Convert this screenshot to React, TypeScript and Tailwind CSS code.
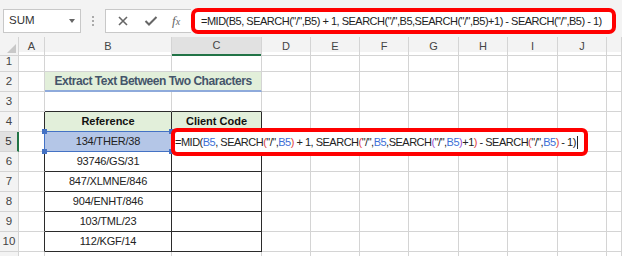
const GRID =
  "grid grid-cols-[19px_26px_127px_90px_49px_49px_49px_50px_49px_50px_49px_1fr]";
const COLS = ["A", "B", "C", "D", "E", "F", "G", "H", "I", "J", "K"];

const data: Record<number, string> = {
  5: "134/THER/38",
  6: "93746/GS/31",
  7: "847/XLMNE/846",
  8: "904/ENHT/846",
  9: "103/TML/23",
  10: "112/KGF/14",
};

const BLUE = "text-[#3d6fd6]";
const RED = "text-[#e23c3c]";
const PURPLE = "text-[#9c4fd4]";

// formula while editing the cell, with Excel's coloured refs and parens
const parts: [string, string][] = [
  ["=MID(", ""],
  ["B5", BLUE],
  [", SEARCH", ""],
  ["(", RED],
  ['"/",', ""],
  ["B5", BLUE],
  [")", RED],
  [" + 1, SEARCH", ""],
  ["(", RED],
  ['"/",', ""],
  ["B5", BLUE],
  [",SEARCH", ""],
  ["(", PURPLE],
  ['"/",', ""],
  ["B5", BLUE],
  [")", PURPLE],
  ["+1", ""],
  [")", RED],
  [" - SEARCH", ""],
  ["(", RED],
  ['"/",', ""],
  ["B5", BLUE],
  [")", RED],
  [" - 1)", ""],
];

const formula = parts.map((p) => p[0]).join("");

const Toolbar = () => (
  <div className="flex h-[37px] items-start bg-[#f3f3f3] pl-[3px] pt-[9px]">
    <div className="flex h-[24px] w-[78px] items-center justify-between border border-[#c8c8c8] bg-white pl-[5px] pr-[5px] text-[11.5px] text-[#333]">
      <span>SUM</span>
      <span className="h-0 w-0 border-x-[3px] border-t-[4px] border-x-transparent border-t-[#666]" />
    </div>
    <div className="flex h-[24px] w-[24px] flex-col items-center justify-center gap-[2px]">
      <span className="h-[2px] w-[2px] bg-[#aaa]" />
      <span className="h-[2px] w-[2px] bg-[#aaa]" />
      <span className="h-[2px] w-[2px] bg-[#aaa]" />
    </div>
    <div className="flex h-[24px] w-[86px] items-center border border-r-0 border-[#c8c8c8] bg-white pl-[10px]">
      <svg width="12" height="12" viewBox="0 0 12 12" className="ml-[1px]">
        <path d="M2 2 L10 10 M10 2 L2 10" stroke="#666" strokeWidth="1.6" fill="none" />
      </svg>
      <svg width="14" height="12" viewBox="0 0 14 12" className="ml-[15px]">
        <path d="M1.5 6 L5 9.5 L12.5 2" stroke="#666" strokeWidth="2" fill="none" />
      </svg>
      <span className="ml-[14px] font-['Liberation_Serif',serif] text-[13px] italic text-[#666]">
        f<span className="text-[10px]">x</span>
      </span>
    </div>
    <div className="-mt-[1px] mr-[6px] flex h-[26px] flex-1 items-center rounded-[7px] border-4 border-[#ff0000] bg-white pl-[6px] text-[11px] tracking-[-0.5px] whitespace-pre text-[#222]">
      {formula}
    </div>
  </div>
);

const HeaderRow = () => (
  <div className={`${GRID} h-[15px] bg-[#f3f3f3] text-[11px] text-[#444]`}>
    <div className="relative border-r border-b border-[#d4d4d4]">
      <span className="absolute right-[2px] bottom-[2px] h-0 w-0 border-b-[9px] border-l-[9px] border-b-[#c8c8c8] border-l-transparent" />
    </div>
    {COLS.map((c) => (
      <div
        key={c}
        className={
          c === "C"
            ? "flex items-center justify-center border-r border-b-2 border-r-[#d4d4d4] border-b-[#217346] bg-[#e1e1e1]"
            : "flex items-center justify-center border-r border-b border-[#d4d4d4]"
        }
      >
        {c === "K" ? "" : c}
      </div>
    ))}
  </div>
);

const Row = ({ r }: { r: number }) => {
  const inTable = r >= 4 && r <= 10;
  const tableCell = "border-r border-b border-[#2b2b2b]";
  const plain = "border-r border-b border-[#d4d4d4]";

  return (
    <div className={`${GRID} h-[20px] text-[11px]`}>
      <div
        className={
          r === 5
            ? "flex items-center justify-center border-r-2 border-b border-r-[#217346] border-b-[#d4d4d4] bg-[#e1e1e1] text-[11.5px] text-[#333]"
            : "flex items-center justify-center border-r border-b border-[#d4d4d4] bg-[#f3f3f3] text-[11.5px] text-[#444]"
        }
      >
        {r <= 10 ? r : ""}
      </div>
      <div className={inTable ? "border-r border-b border-r-[#2b2b2b] border-b-[#d4d4d4]" : plain} />

      {r === 2 ? (
        <div className="col-span-2 flex items-center justify-center border-r border-b-2 border-r-[#d4d4d4] border-b-[#8eaadb] bg-[#e2efda] text-[12px] font-bold tracking-[-0.45px] text-[#44546a]">
          Extract Text Between Two Characters
        </div>
      ) : r === 4 ? (
        <>
          <div className={`${tableCell} flex items-center justify-center bg-[#e2efda] font-bold text-[#111]`}>
            Reference
          </div>
          <div className={`${tableCell} flex items-center justify-center bg-[#e2efda] font-bold text-[#111]`}>
            Client Code
          </div>
        </>
      ) : r === 5 ? (
        <>
          <div className={`${tableCell} relative flex items-center justify-center bg-[#b4c6e7] tracking-[-0.2px] text-[#222]`}>
            {data[5]}
            <span className="absolute -inset-[1px] border border-[#4472c4]" />
            <span className="absolute -top-[3px] -left-[3px] h-[5px] w-[5px] bg-[#4472c4]" />
            <span className="absolute -top-[3px] -right-[3px] h-[5px] w-[5px] bg-[#4472c4]" />
            <span className="absolute -bottom-[3px] -left-[3px] h-[5px] w-[5px] bg-[#4472c4]" />
            <span className="absolute -right-[3px] -bottom-[3px] h-[5px] w-[5px] bg-[#4472c4]" />
          </div>
          <div className={`${tableCell} relative`}>
            <div className="absolute -top-[4px] -left-[1px] z-10 flex h-[28px] w-[417px] items-center rounded-[6px] border-4 border-[#ff0000] bg-white text-[11px] tracking-[-0.5px] whitespace-pre text-[#222]">
              <span>
                {parts.map(([t, cls], i) => (
                  <span key={i} className={cls}>
                    {t}
                  </span>
                ))}
              </span>
              <span className="ml-[1px] h-[13px] w-[1px] bg-[#222]" />
            </div>
          </div>
        </>
      ) : inTable ? (
        <>
          <div className={`${tableCell} flex items-center justify-center tracking-[-0.2px] text-[#222]`}>
            {data[r]}
          </div>
          <div className={tableCell} />
        </>
      ) : r === 3 ? (
        <>
          <div className="border-r border-b border-r-[#d4d4d4] border-b-[#2b2b2b]" />
          <div className="border-r border-b border-r-[#d4d4d4] border-b-[#2b2b2b]" />
        </>
      ) : (
        <>
          <div className={plain} />
          <div className={plain} />
        </>
      )}

      {COLS.slice(3).map((c) => (
        <div key={c} className={plain} />
      ))}
    </div>
  );
};

export default function App() {
  return (
    <div className="h-[256px] w-[622px] overflow-hidden bg-white font-['Liberation_Sans',Arial,sans-serif]">
      <Toolbar />
      <HeaderRow />
      {[1, 2, 3, 4, 5, 6, 7, 8, 9, 10, 11].map((r) => (
        <Row key={r} r={r} />
      ))}
    </div>
  );
}
